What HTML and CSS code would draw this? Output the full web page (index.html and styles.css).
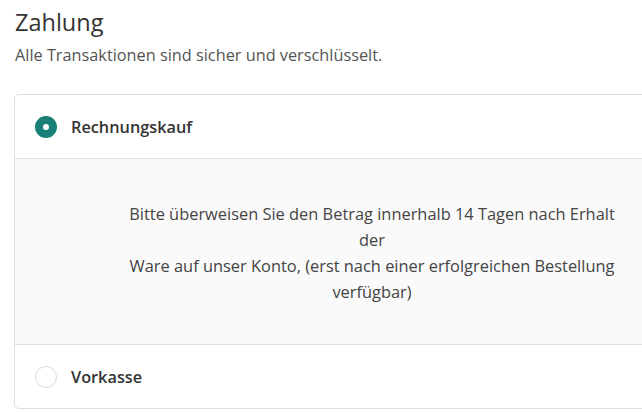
FILE: index.html
```html
<!DOCTYPE html>
<html lang="de">
<head>
<meta charset="utf-8">
<link rel="stylesheet" href="styles.css">
</head>
<body>
<section class="payment">
  <h2 class="title">Zahlung</h2>
  <p class="subtitle">Alle Transaktionen sind sicher und verschlüsselt.</p>
  <div class="card">
    <div class="option option-active">
      <span class="radio radio-checked"></span>
      <span class="label">Rechnungskauf</span>
    </div>
    <div class="details">
      <p class="details-text">Bitte überweisen Sie den Betrag innerhalb 14 Tagen nach Erhalt der<br>Ware auf unser Konto, (erst nach einer erfolgreichen Bestellung verfügbar)</p>
    </div>
    <div class="option">
      <span class="radio"></span>
      <span class="label">Vorkasse</span>
    </div>
  </div>
</section>
</body>
</html>
```

FILE: styles.css
```css
html, body {
  margin: 0;
  padding: 0;
  overflow: hidden;
  background: #fff;
}
body {
  font-family: "Open Sans", "Noto Sans", sans-serif;
  color: #333;
}
.payment {
  padding: 6px 0 0 14px;
  width: 716px;
}
.title {
  margin: 0 0 0 1px;
  font-size: 23.5px;
  font-weight: 400;
  line-height: 32px;
  color: #333;
}
.subtitle {
  margin: 5px 0 0 1px;
  font-size: 16.3px;
  line-height: 24px;
  color: #545454;
}
.card {
  margin-top: 27px;
  border: 1px solid #dedede;
  border-radius: 5px;
  overflow: hidden;
}
.option {
  display: flex;
  align-items: center;
  gap: 14px;
  height: 63px;
  padding: 0 20px;
}
.option-active {
  border-bottom: 1px solid #dedede;
}
.radio {
  width: 22px;
  height: 22px;
  border-radius: 50%;
  border: 1px solid #d9d9d9;
  box-sizing: border-box;
  background: #fff;
  flex: none;
}
.radio-checked {
  border: 8px solid #1a7f78;
  background: #fff;
}
.label {
  font-size: 16.3px;
  font-weight: 600;
  color: #333;
}
.details {
  background: #fafafa;
  border-bottom: 1px solid #dedede;
  padding: 42px 20px 39px;
}
.details-text {
  margin: 0 auto;
  max-width: 496px;
  text-align: center;
  font-size: 16.4px;
  line-height: 26px;
  color: #444;
}
```
